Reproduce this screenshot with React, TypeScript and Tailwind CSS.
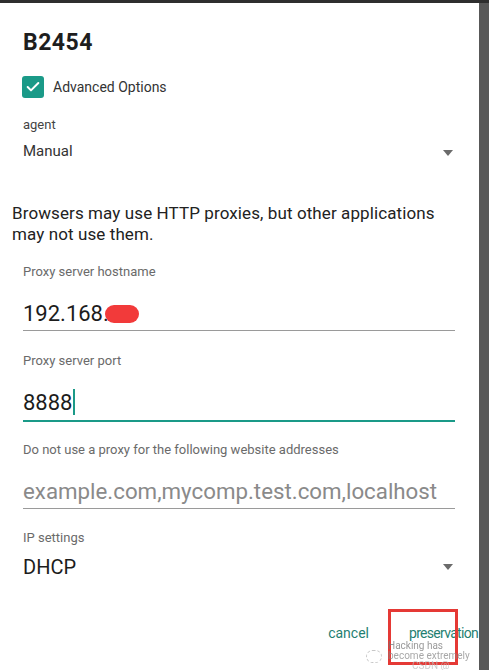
import { Check } from 'lucide-react'

const font = { fontFamily: 'Roboto, "Noto Sans", sans-serif' }

function Caret() {
  return <span className="block w-0 h-0 border-l-[5px] border-r-[5px] border-t-[6px] border-l-transparent border-r-transparent border-t-[#6b6b6b]" />
}

function Label({ children, className = '' }: { children: React.ReactNode; className?: string }) {
  return <div className={`h-4 leading-4 text-[13px] text-[#6a6a6a] ${className}`}>{children}</div>
}

export default function App() {
  return (
    <div className="w-[489px] h-[670px] overflow-hidden bg-[#585858] border-t-[3px] border-[#2e2e2e] flex" style={font}>
      <div className="relative w-[479px] h-full bg-white pl-[23px] pr-[24px] pt-[26px]">
        <h1 className="h-7 leading-7 text-[23px] font-bold tracking-[0.5px] text-[#1e1e1e]">B2454</h1>

        <div className="mt-[18px] h-6 flex items-center gap-[9px] -ml-px">
          <span className="w-[22px] h-[22px] rounded-[3px] bg-[#1a9a88] flex items-center justify-center">
            <Check className="w-4 h-4 text-white" strokeWidth={3} />
          </span>
          <span className="text-[14px] text-[#333]">Advanced Options</span>
        </div>

        <Label className="mt-[18px] text-[#444]">agent</Label>
        <div className="mt-2 h-5 flex items-center justify-between pr-[2px]">
          <span className="text-[15px] text-[#333]">Manual</span>
          <span className="mt-1"><Caret /></span>
        </div>

        <p className="mt-[42px] -ml-[11px] text-[17px] leading-[21px] tracking-[0.1px] text-[#222]">
          Browsers may use HTTP proxies, but other applications<br />may not use them.
        </p>

        <Label className="mt-[19px]">Proxy server hostname</Label>
        <div className="mt-[17px] h-[34px] flex items-center text-[22px] text-[#1c1c1c] border-b border-[#9a9a9a]">
          192.168.
          <span className="ml-[-4px] w-[34px] h-[18px] rounded-full bg-[#f23a3a] blur-[0.5px]" />
        </div>

        <Label className="mt-[22px]">Proxy server port</Label>
        <div className="mt-[17px] h-[36px] flex items-center pb-[2px] text-[22px] text-[#1c1c1c] border-b-2 border-[#1a9a88]">
          8888<span className="ml-px w-[2px] h-[26px] bg-[#1a9a88]" />
        </div>

        <Label className="mt-[20px]">Do not use a proxy for the following website addresses</Label>
        <div className="mt-[17px] h-[34px] flex items-center text-[22.3px] text-[#8a8a8a] border-b border-[#9a9a9a]">
          example.com,mycomp.test.com,localhost
        </div>

        <Label className="mt-[21px]">IP settings</Label>
        <div className="mt-[9px] h-6 flex items-center justify-between pr-[2px]">
          <span className="text-[20px] text-[#1c1c1c]">DHCP</span>
          <Caret />
        </div>

        <div className="mt-[44px] h-5 flex justify-end items-center gap-[40px] -mr-[24px] text-[14px] text-[#1f7f72]">
          <span>cancel</span>
          <span className="tracking-[-0.7px] mr-px">preservation</span>
        </div>

        <div className="absolute left-[388px] top-[606px] w-[70px] h-[56px] border-[3px] border-[#e53935]" />
        <div className="absolute left-[366px] top-[638px] flex items-center gap-[6px] opacity-75 whitespace-nowrap">
          <span className="w-[16px] h-[13px] rounded-full border border-dashed border-[#b5b5b5]" />
          <div className="text-[10px] leading-[10px] text-[#777]">
            <div>Hacking has</div>
            <div className="text-[#8a8a8a]">become extremely</div>
            <div className="pl-6 text-[#bbb]">CSDN @</div>
          </div>
        </div>
      </div>
    </div>
  )
}
